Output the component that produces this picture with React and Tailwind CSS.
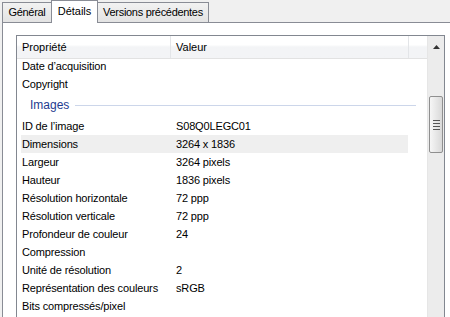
import React from 'react';

const rowsTop = [
  ['Date d’acquisition', ''],
  ['Copyright', ''],
];

const rowsImages = [
  ['ID de l’image', 'S08Q0LEGC01'],
  ['Dimensions', '3264 x 1836', true],
  ['Largeur', '3264 pixels'],
  ['Hauteur', '1836 pixels'],
  ['Résolution horizontale', '72 ppp'],
  ['Résolution verticale', '72 ppp'],
  ['Profondeur de couleur', '24'],
  ['Compression', ''],
  ['Unité de résolution', '2'],
  ['Représentation des couleurs', 'sRGB'],
  ['Bits compressés/pixel', ''],
];

function Row({ name, value, hot }) {
  return (
    <div className="flex h-[18px] items-center">
      <div className={`ml-[4px] flex h-full w-[387px] items-center tracking-[-0.15px] ${hot ? 'bg-[#efefef]' : ''}`}>
        <span className="w-[155px] pl-[1px]">{name}</span>
        <span>{value}</span>
      </div>
    </div>
  );
}

function Tab({ label, active, w }) {
  if (active) {
    return (
      <div className={`relative z-10 -mb-px flex h-[23px] items-center justify-center border border-b-0 border-[#898c95] bg-white pb-[2px] ${w}`}>
        {label}
      </div>
    );
  }
  return (
    <div className={`flex h-[20px] items-center justify-center border border-b-0 border-[#898c95] bg-gradient-to-b from-[#f2f2f2] to-[#e3e3e3] tracking-[-0.3px] ${w}`}>
      {label}
    </div>
  );
}

export default function App() {
  return (
    <div className="h-[317px] w-[450px] overflow-hidden bg-[#f0f0f0] text-[11px] text-black" style={{ fontFamily: '"Liberation Sans", Arial, sans-serif' }}>
      <div className="flex h-[22px] items-end pl-[2px] pt-[1px]">
        <Tab label="Général" w="w-[50px] -mr-px" />
        <Tab label="Détails" active w="w-[47px]" />
        <Tab label="Versions précédentes" w="w-[112px] -ml-px" />
      </div>
      <div className="ml-[2px] h-[295px] border-l border-t border-[#898c95] bg-white pl-[13px] pt-[12px]">
        <div className="flex h-[300px] w-[429px] border border-[#828790] bg-white">
          <div className="flex w-[410px] flex-col">
            <div className="flex h-[23px] border-b border-[#e2e2e2] bg-gradient-to-b from-white from-40% to-[#f3f4f6] to-50%">
              <div className="flex w-[154px] items-center border-r border-[#e3e5e8] pl-[5px]">Propriété</div>
              <div className="flex w-[238px] items-center border-r border-[#e3e5e8] pl-[5px]">Valeur</div>
              <div className="flex-1" />
            </div>
            <div className="flex-1 overflow-hidden">
              <div className="-mt-[2px]">
                {rowsTop.map(([n, v]) => <Row key={n} name={n} value={v} />)}
                <div className="flex h-[24px] items-center pl-[13px] pr-[11px]">
                  <span className="text-[12px] text-[#1e3b8f]">Images</span>
                  <div className="ml-[6px] mt-px h-px flex-1 bg-[#ccd6ea]" />
                </div>
                {rowsImages.map(([n, v, h]) => <Row key={n} name={n} value={v} hot={h} />)}
              </div>
            </div>
          </div>
          <div className="flex w-[17px] flex-col border-l border-[#e6e6e6] bg-[#ececec]">
            <div className="flex h-[22px] items-center justify-center">
              <svg width="7" height="4" viewBox="0 0 7 4"><path d="M3.5 0 L7 4 L0 4 Z" fill="#333" /></svg>
            </div>
            <div className="h-[38px]" />
            <div className="mx-px flex h-[57px] items-center justify-center rounded-[2px] border border-[#8f8f8f] bg-gradient-to-r from-[#f6f6f6] to-[#d9d9d9]">
              <div className="flex flex-col gap-[2px]">
                <div className="h-px w-[7px] bg-[#555]" />
                <div className="h-px w-[7px] bg-[#555]" />
                <div className="h-px w-[7px] bg-[#555]" />
                <div className="h-px w-[7px] bg-[#555]" />
              </div>
            </div>
          </div>
        </div>
      </div>
    </div>
  );
}
